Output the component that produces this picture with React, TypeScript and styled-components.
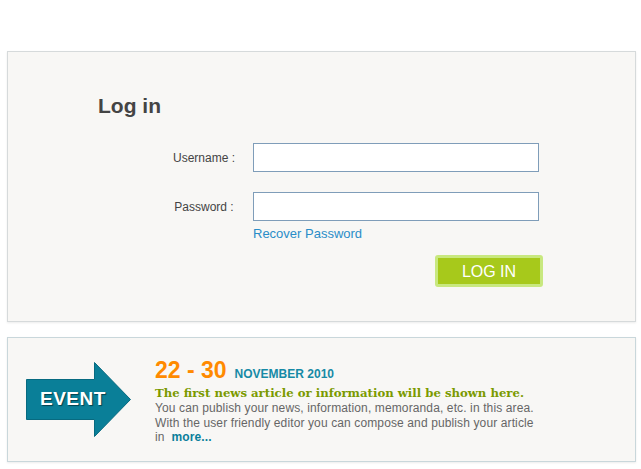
import React from "react";
import styled, { createGlobalStyle } from "styled-components";

const Global = createGlobalStyle`
  html, body { margin: 0; padding: 0; background: #ffffff; }
  body { font-family: "Liberation Sans", Arial, sans-serif; }
  * { box-sizing: border-box; }
`;

const Page = styled.div`
  width: 641px;
  padding: 51px 0 8px 7px;
  display: flex;
  flex-direction: column;
  gap: 15px;
`;

const Panel = styled.section<{ $h: number; $border: string }>`
  width: 629px;
  height: ${(p) => p.$h}px;
  background: #f8f7f5;
  border: 1px solid ${(p) => p.$border};
  box-shadow: 0 1px 2px rgba(0, 0, 0, 0.08);
`;

const LoginPanel = styled(Panel)`
  padding: 42px 0 0 90px;
`;

const Heading = styled.h1`
  margin: 0;
  font-size: 21px;
  line-height: 24px;
  font-weight: bold;
  color: #444444;
`;

const Form = styled.form`
  margin: 25px 0 0 57px;
  width: 388px;
  display: flex;
  flex-direction: column;
`;

const Field = styled.div<{ $top?: number }>`
  display: flex;
  align-items: center;
  margin-top: ${(p) => p.$top ?? 0}px;
`;

const Label = styled.label`
  width: 98px;
  text-align: center;
  font-size: 12px;
  color: #444444;
`;

const Input = styled.input`
  width: 286px;
  height: 29px;
  border: 1px solid #7f9db9;
  background: #ffffff;
  padding: 2px 4px;
  font: 12px "Liberation Sans", Arial, sans-serif;
  outline: none;
`;

const Recover = styled.a`
  display: block;
  margin: 5px 0 0 98px;
  font-size: 13px;
  line-height: 15px;
  color: #2a8dc8;
  text-decoration: none;
  align-self: flex-start;
`;

const Actions = styled.div`
  display: flex;
  justify-content: flex-end;
  margin-top: 14px;
`;

const LoginButton = styled.button`
  width: 108px;
  height: 32px;
  border: 3px solid #c8e87f;
  border-radius: 3px;
  background: #a7c91b;
  color: #ffffff;
  font: 16px "Liberation Sans", Arial, sans-serif;
  line-height: 24px;
  padding: 2px 0 0;
  cursor: pointer;
`;

const EventPanel = styled(Panel)`
  display: flex;
  align-items: flex-start;
  gap: 23px;
  padding: 20px 0 0 18px;
`;

const Badge = styled.div`
  position: relative;
  width: 106px;
  height: 75px;
  margin-top: 4px;
  flex: none;
`;

const BadgeLabel = styled.span`
  position: absolute;
  left: 14px;
  top: 27px;
  font-size: 19px;
  line-height: 19px;
  font-weight: bold;
  letter-spacing: 0.5px;
  color: #ffffff;
  text-shadow: 1px 1px 1px #03414d;
`;

const Content = styled.div`
  display: flex;
  flex-direction: column;
`;

const DateLine = styled.div`
  display: flex;
  align-items: baseline;
  gap: 8px;
  line-height: 24px;
`;

const Days = styled.span`
  font-size: 23px;
  font-weight: bold;
  color: #ff8a00;
`;

const Month = styled.span`
  font-size: 12px;
  font-weight: bold;
  color: #168aa6;
`;

const Headline = styled.h2`
  margin: 0;
  font-family: "DejaVu Serif", "Liberation Serif", serif;
  font-size: 11.7px;
  line-height: 15px;
  font-weight: bold;
  color: #7b9a00;
  white-space: nowrap;
`;

const Body = styled.p`
  margin: 0;
  font-size: 12px;
  line-height: 14.5px;
  letter-spacing: 0.12px;
  color: #666666;
  white-space: nowrap;
`;

const More = styled.a`
  font-weight: bold;
  color: #0b7f9b;
  text-decoration: none;
`;

function EventArrow() {
  return (
    <svg width="106" height="75" viewBox="0 0 106 75">
      <path
        d="M0.5 17.5 H68.5 V0.5 L104.5 37.5 L68.5 74.5 V57.5 H0.5 Z"
        fill="#0a7f98"
        stroke="#076a80"
        strokeWidth="1"
      />
    </svg>
  );
}

export default function App() {
  return (
    <>
      <Global />
      <Page>
        <LoginPanel $h={271} $border="#d6dadb">
          <Heading>Log in</Heading>
          <Form onSubmit={(e) => e.preventDefault()}>
            <Field>
              <Label htmlFor="username">Username :</Label>
              <Input id="username" type="text" />
            </Field>
            <Field $top={20}>
              <Label htmlFor="password">Password :</Label>
              <Input id="password" type="password" />
            </Field>
            <Recover href="#">Recover Password</Recover>
            <Actions>
              <LoginButton type="submit">LOG IN</LoginButton>
            </Actions>
          </Form>
        </LoginPanel>
        <EventPanel $h={125} $border="#c9d7db">
          <Badge>
            <EventArrow />
            <BadgeLabel>EVENT</BadgeLabel>
          </Badge>
          <Content>
            <DateLine>
              <Days>22 - 30</Days>
              <Month>NOVEMBER 2010</Month>
            </DateLine>
            <Headline>The first news article or information will be shown here.</Headline>
            <Body>
              You can publish your news, information, memoranda, etc. in this area.
              <br />
              With the user friendly editor you can compose and publish your article
              <br />
              in&nbsp; <More href="#">more...</More>
            </Body>
          </Content>
        </EventPanel>
      </Page>
    </>
  );
}
